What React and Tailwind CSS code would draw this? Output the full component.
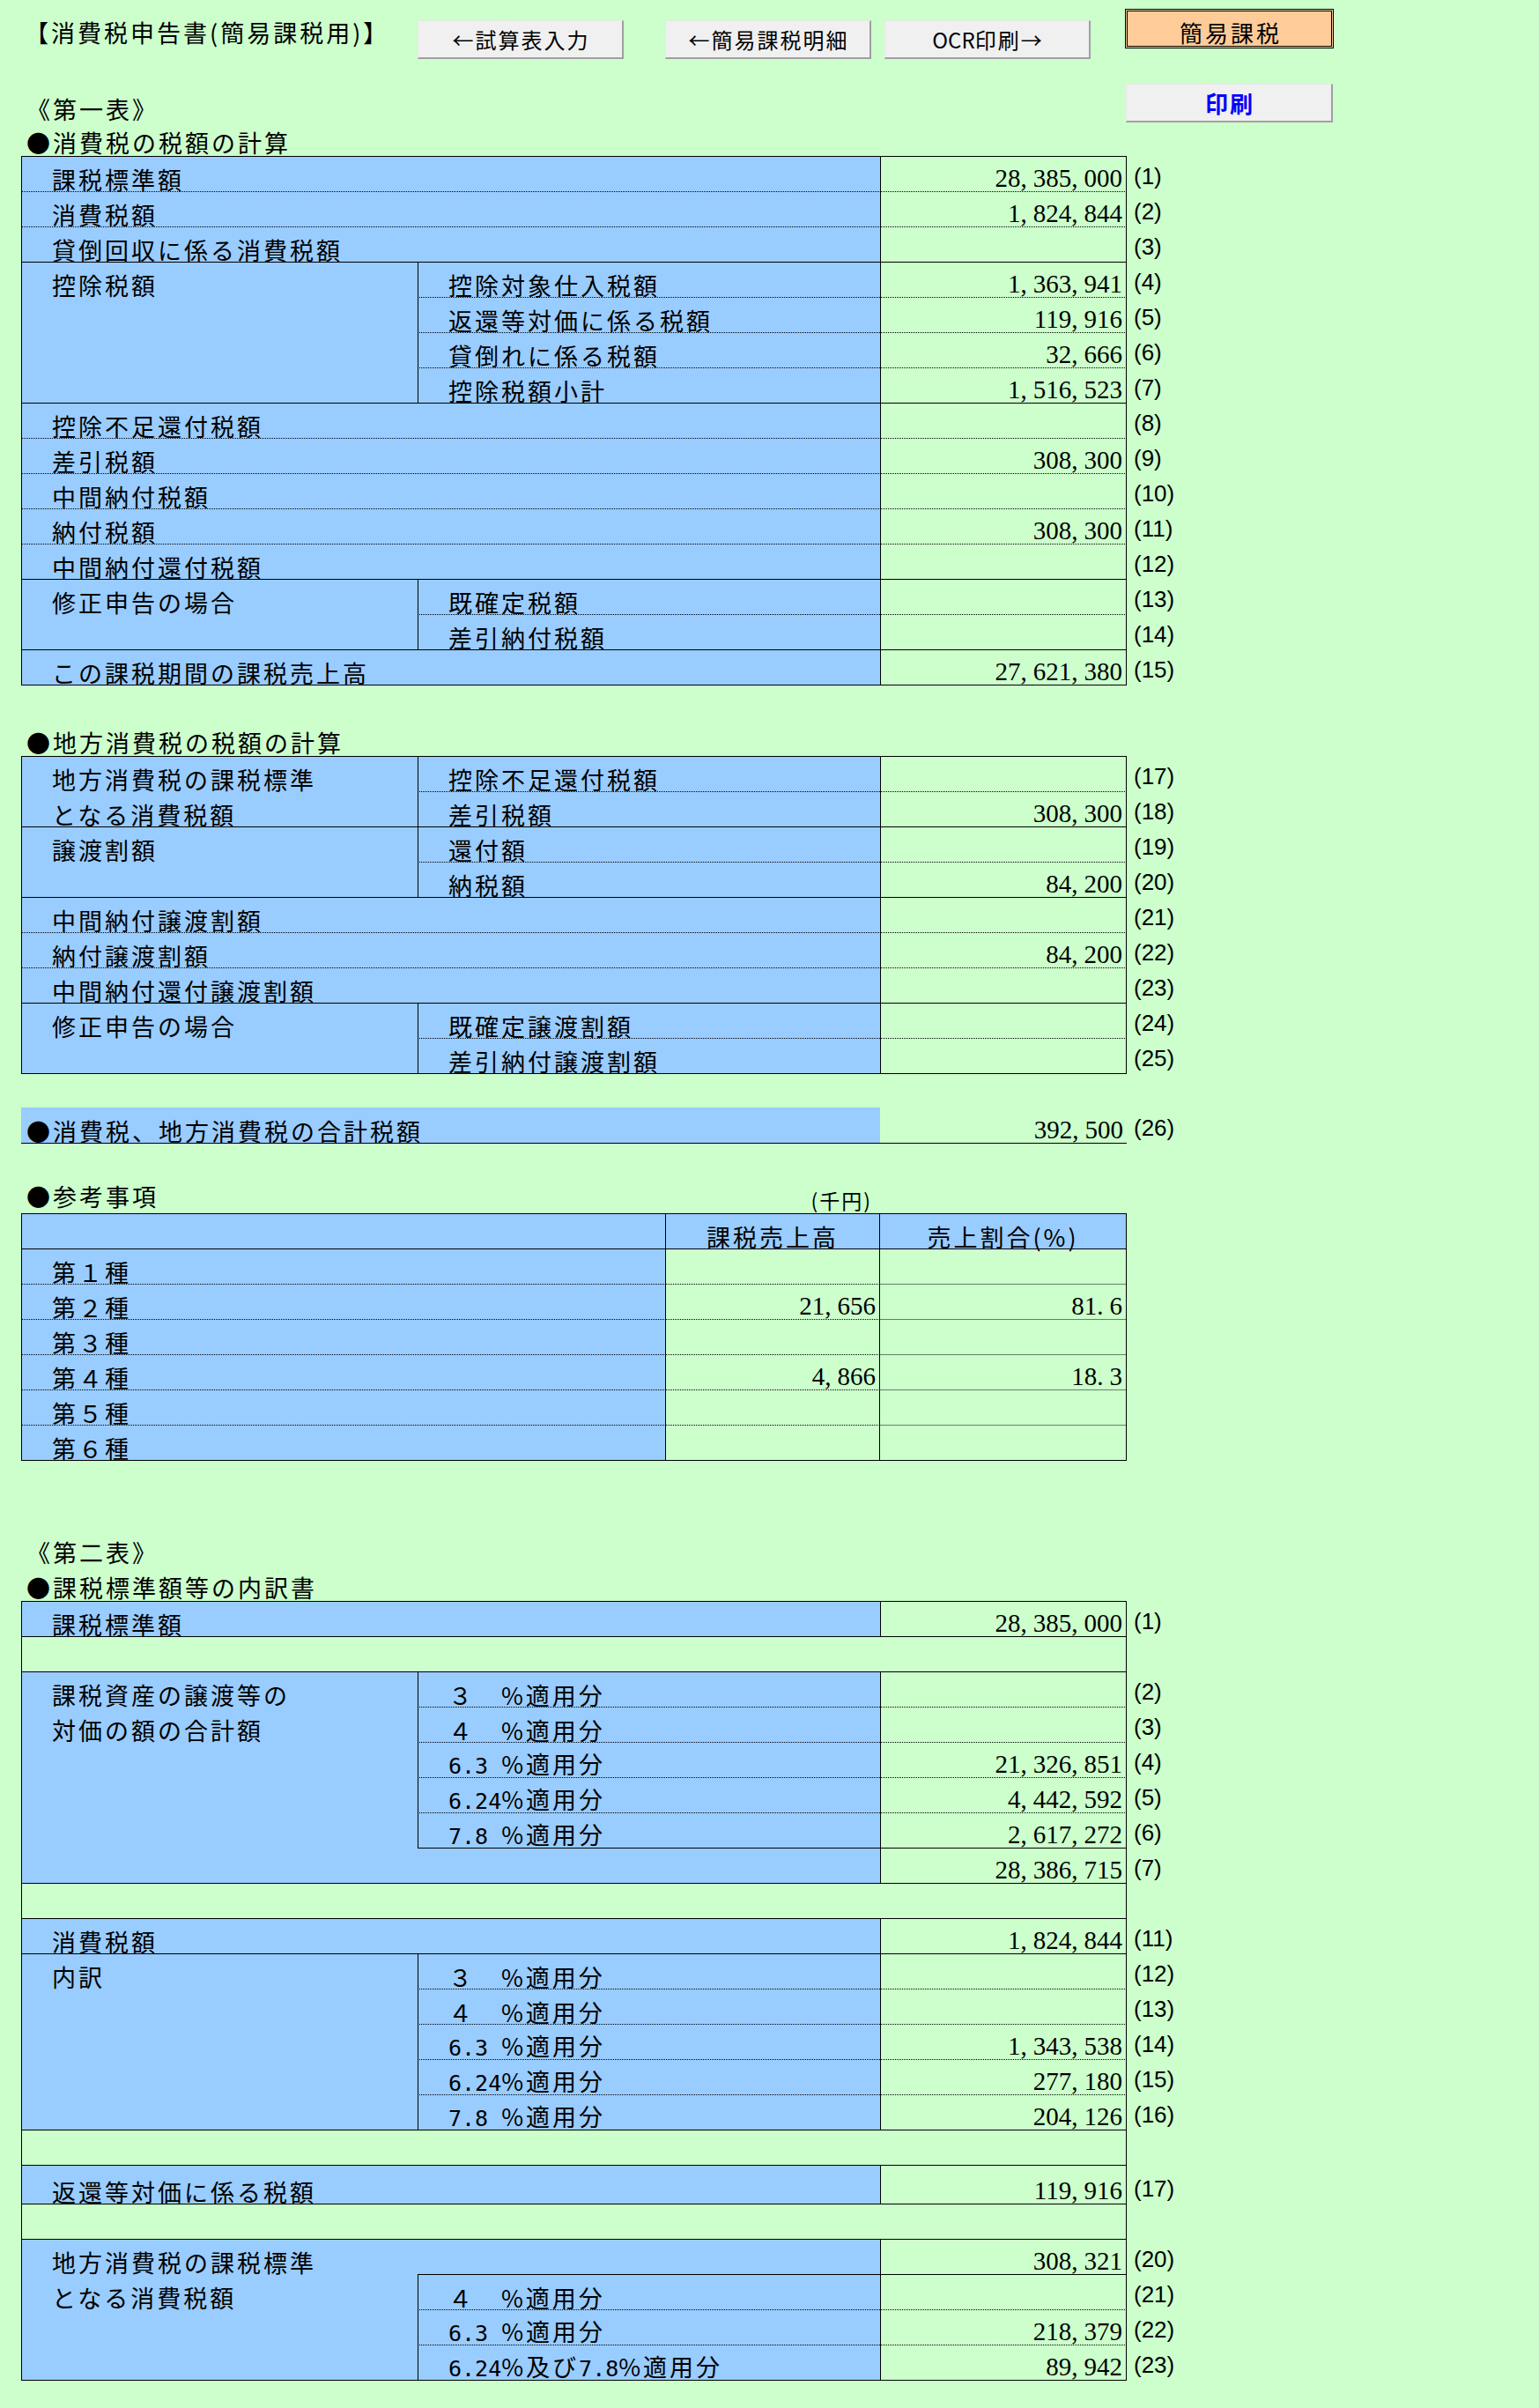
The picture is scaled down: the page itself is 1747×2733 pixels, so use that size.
import React from "react";

const T = "font-['Noto_Sans_CJK_JP',sans-serif] text-[27px] leading-none tracking-[3px] text-black whitespace-nowrap";
const NUM = "font-['Liberation_Serif','Noto_Sans_CJK_JP',serif] text-[29px] leading-none text-black whitespace-nowrap";
const LBL = "font-['Liberation_Sans',sans-serif] text-[26px] leading-none text-black whitespace-nowrap";
const BTNTXT = "font-['Noto_Sans_CJK_JP',sans-serif] text-[24px] leading-none tracking-[2px] pl-[2px] text-black whitespace-nowrap";
const MONO = "font-['DejaVu_Sans_Mono',monospace] text-[25px] tracking-normal";

const DOT = "pb-[1px] bg-[linear-gradient(to_right,#000_1px,transparent_1px)] bg-[length:2px_1px] bg-repeat-x bg-bottom";
const BOT = {
  dot: DOT,
  solid: "border-b border-black",
  none: "",
};
const RS = { 1: "", 2: "row-span-2", 4: "row-span-4", 5: "row-span-5", 6: "row-span-6" };

function Num({ v }) {
  if (!v) return null;
  const out = [];
  for (let i = 0; i < v.length; i++) {
    const c = v[i];
    if (c === "," || c === ".") out.push(<span key={i} className="mr-[7px]">{c}</span>);
    else out.push(<span key={i}>{c}</span>);
  }
  return <span className={NUM}>{out}</span>;
}

function Rate({ p, mono = false, rest }) {
  return (
    <>
      {mono ? <span className={MONO}>{p}</span> : <span>{p}</span>}
      {rest}
    </>
  );
}

function LCell({ lines, span = 1, cols = 1, b = "dot" }) {
  const cls = `${cols === 2 ? "col-span-2" : ""} ${RS[span]} ${BOT[b]} border-l border-black bg-[#99ccff] flex flex-col`;
  return (
    <div className={cls}>
      {span === 1 ? (
        <div className="h-full flex items-end pl-[34px]">
          <span className={T}>{lines[0]}</span>
        </div>
      ) : (
        lines.map((l, i) => (
          <div key={i} className="h-[40px] shrink-0 flex items-end pb-[1px] pl-[34px]">
            <span className={T}>{l}</span>
          </div>
        ))
      )}
    </div>
  );
}

function SCell({ children, b = "dot", noLeft = false }) {
  return (
    <div className={`${BOT[b]} ${noLeft ? "" : "border-l border-black"} bg-[#99ccff] flex items-end pl-[34px]`}>
      <span className={T}>{children}</span>
    </div>
  );
}

function VCell({ v, b = "dot" }) {
  return (
    <div className={`${BOT[b]} border-l border-r border-black flex items-end justify-end pr-[4px]`}>
      <Num v={v} />
    </div>
  );
}

function NCell({ n }) {
  return (
    <div className="flex items-end pl-[8px] pb-[5px]">
      <span className={LBL}>{n}</span>
    </div>
  );
}

function Blank() {
  return (
    <>
      <div className="col-span-3 border-l border-r border-b border-black" />
      <div />
    </>
  );
}

function TopLine() {
  return <div className="ml-[24px] w-[1255px] h-px bg-black" />;
}

function Heading({ h, pb, children }) {
  return (
    <div className={`${h} ${pb} flex items-end pl-[30px]`}>
      <span className={T}>{children}</span>
    </div>
  );
}

const BTN = "h-[44px] bg-[#f0f0f0] border-t border-l border-t-[#e8e8e8] border-l-[#e8e8e8] border-r-2 border-b-2 border-r-[#a0a0a0] border-b-[#a0a0a0] flex items-center justify-center";

export default function App() {
  return (
    <div className="w-full min-h-[2733px] bg-[#ccffcc] overflow-hidden">
      {/* Block A */}
      <div className="h-[95px] flex items-start">
        <div className="ml-[28px] w-[446px] mt-[23px]">
          <span className={T}>【消費税申告書(簡易課税用)】</span>
        </div>
        <div className={`mt-[23px] w-[234px] ${BTN}`}>
          <span className={BTNTXT}>←試算表入力</span>
        </div>
        <div className={`ml-[47px] mt-[23px] w-[234px] ${BTN}`}>
          <span className={BTNTXT}>←簡易課税明細</span>
        </div>
        <div className={`ml-[15px] mt-[23px] w-[234px] ${BTN}`}>
          <span className={BTNTXT}>
            <span className="tracking-normal">OCR</span>印刷→
          </span>
        </div>
        <div className="ml-[39px] mt-[10px] w-[237px] h-[45px] bg-[#ffcc99] border-[3px] border-double border-black flex items-end justify-center pb-[2px]">
          <span className="font-['Noto_Sans_CJK_JP',sans-serif] text-[26px] leading-none tracking-[3px] pl-[3px] text-black whitespace-nowrap">簡易課税</span>
        </div>
      </div>

      {/* Block B */}
      <div className="h-[44px] flex">
        <div className="w-[1278px] pl-[30px] pb-[2px] flex items-end">
          <span className={T}>《第一表》</span>
        </div>
        <div className={`w-[235px] ${BTN}`}>
          <span className="font-['Noto_Sans_CJK_JP',sans-serif] text-[26px] leading-none tracking-[2px] pl-[2px] font-bold text-[#0000ff] whitespace-nowrap">印刷</span>
        </div>
      </div>

      <Heading h="h-[38px]" pb="pb-[2px]">●消費税の税額の計算</Heading>

      {/* Table 1 */}
      <TopLine />
      <div className="ml-[24px] grid grid-cols-[450px_525px_280px_120px] grid-rows-[repeat(15,40px)]">
        <LCell cols={2} lines={["課税標準額"]} />
        <VCell v="28,385,000" />
        <NCell n="(1)" />
        <LCell cols={2} lines={["消費税額"]} />
        <VCell v="1,824,844" />
        <NCell n="(2)" />
        <LCell cols={2} lines={["貸倒回収に係る消費税額"]} b="solid" />
        <VCell b="solid" />
        <NCell n="(3)" />
        <LCell span={4} lines={["控除税額"]} b="solid" />
        <SCell>控除対象仕入税額</SCell>
        <VCell v="1,363,941" />
        <NCell n="(4)" />
        <SCell>返還等対価に係る税額</SCell>
        <VCell v="119,916" />
        <NCell n="(5)" />
        <SCell>貸倒れに係る税額</SCell>
        <VCell v="32,666" />
        <NCell n="(6)" />
        <SCell b="solid">控除税額小計</SCell>
        <VCell v="1,516,523" b="solid" />
        <NCell n="(7)" />
        <LCell cols={2} lines={["控除不足還付税額"]} />
        <VCell />
        <NCell n="(8)" />
        <LCell cols={2} lines={["差引税額"]} />
        <VCell v="308,300" />
        <NCell n="(9)" />
        <LCell cols={2} lines={["中間納付税額"]} />
        <VCell />
        <NCell n="(10)" />
        <LCell cols={2} lines={["納付税額"]} />
        <VCell v="308,300" />
        <NCell n="(11)" />
        <LCell cols={2} lines={["中間納付還付税額"]} b="solid" />
        <VCell b="solid" />
        <NCell n="(12)" />
        <LCell span={2} lines={["修正申告の場合"]} b="solid" />
        <SCell>既確定税額</SCell>
        <VCell />
        <NCell n="(13)" />
        <SCell b="solid">差引納付税額</SCell>
        <VCell b="solid" />
        <NCell n="(14)" />
        <LCell cols={2} lines={["この課税期間の課税売上高"]} b="solid" />
        <VCell v="27,621,380" b="solid" />
        <NCell n="(15)" />
      </div>

      <Heading h="h-[80px]" pb="pb-[2px]">●地方消費税の税額の計算</Heading>

      {/* Table 2 */}
      <TopLine />
      <div className="ml-[24px] grid grid-cols-[450px_525px_280px_120px] grid-rows-[repeat(9,40px)]">
        <LCell span={2} lines={["地方消費税の課税標準", "となる消費税額"]} b="solid" />
        <SCell>控除不足還付税額</SCell>
        <VCell />
        <NCell n="(17)" />
        <SCell b="solid">差引税額</SCell>
        <VCell v="308,300" b="solid" />
        <NCell n="(18)" />
        <LCell span={2} lines={["譲渡割額"]} b="solid" />
        <SCell>還付額</SCell>
        <VCell />
        <NCell n="(19)" />
        <SCell b="solid">納税額</SCell>
        <VCell v="84,200" b="solid" />
        <NCell n="(20)" />
        <LCell cols={2} lines={["中間納付譲渡割額"]} />
        <VCell />
        <NCell n="(21)" />
        <LCell cols={2} lines={["納付譲渡割額"]} />
        <VCell v="84,200" />
        <NCell n="(22)" />
        <LCell cols={2} lines={["中間納付還付譲渡割額"]} b="solid" />
        <VCell b="solid" />
        <NCell n="(23)" />
        <LCell span={2} lines={["修正申告の場合"]} b="solid" />
        <SCell>既確定譲渡割額</SCell>
        <VCell />
        <NCell n="(24)" />
        <SCell b="solid">差引納付譲渡割額</SCell>
        <VCell b="solid" />
        <NCell n="(25)" />
      </div>

      {/* Row 26 */}
      <div className="mt-[38px] flex">
        <div className="ml-[24px] w-[1255px] h-[41px] border-b border-black flex">
          <div className="w-[975px] bg-[#99ccff] flex items-end pl-[6px]">
            <span className={T}>●消費税、地方消費税の合計税額</span>
          </div>
          <div className="flex-1 flex items-end justify-end pr-[4px]">
            <Num v="392,500" />
          </div>
        </div>
        <div className="flex items-end pl-[8px] pb-[5px]">
          <span className={LBL}>(26)</span>
        </div>
      </div>

      {/* 参考事項 */}
      <div className="h-[79px] flex items-end">
        <div className="w-[755px] pl-[30px] pb-[2px]">
          <span className={T}>●参考事項</span>
        </div>
        <div className="w-[243px] flex justify-end pr-[8px] pb-[3px]">
          <span className="font-['Noto_Sans_CJK_JP',sans-serif] text-[23px] leading-none tracking-[2px] text-black whitespace-nowrap">(千円)</span>
        </div>
      </div>
      <TopLine />
      <div className="ml-[24px] grid grid-cols-[731px_243px_281px] grid-rows-[repeat(7,40px)]">
        <div className="border-l border-b border-black bg-[#99ccff]" />
        <div className="border-l border-b border-black bg-[#99ccff] flex items-end justify-center">
          <span className={T}>課税売上高</span>
        </div>
        <div className="border-l border-r border-b border-black bg-[#99ccff] flex items-end justify-center">
          <span className={T}>売上割合(%)</span>
        </div>
        {[
          ["第１種", "", ""],
          ["第２種", "21,656", "81.6"],
          ["第３種", "", ""],
          ["第４種", "4,866", "18.3"],
          ["第５種", "", ""],
          ["第６種", "", ""],
        ].map(([a, b, c], i) => {
          const bot = i === 5 ? BOT.solid : BOT.dot;
          return (
            <React.Fragment key={i}>
              <div className={`${bot} border-l border-black bg-[#99ccff] flex items-end pl-[34px]`}>
                <span className={T}>{a}</span>
              </div>
              <div className={`${bot} border-l border-black flex items-end justify-end pr-[4px]`}>
                <Num v={b} />
              </div>
              <div className={`${bot} border-l border-r border-black flex items-end justify-end pr-[4px]`}>
                <Num v={c} />
              </div>
            </React.Fragment>
          );
        })}
      </div>

      {/* 第二表 */}
      <Heading h="h-[120px]" pb="pb-[3px]">《第二表》</Heading>
      <Heading h="h-[39px]" pb="pb-[2px]">●課税標準額等の内訳書</Heading>
      <TopLine />
      <div className="ml-[24px] grid grid-cols-[450px_525px_280px_120px] grid-rows-[repeat(16,40px)_44px_repeat(5,40px)]">
        <LCell cols={2} lines={["課税標準額"]} b="solid" />
        <VCell v="28,385,000" b="solid" />
        <NCell n="(1)" />
        <Blank />
        <LCell span={6} lines={["課税資産の譲渡等の", "対価の額の合計額"]} b="solid" />
        <SCell><Rate p="３　" rest="%適用分" /></SCell>
        <VCell />
        <NCell n="(2)" />
        <SCell><Rate p="４　" rest="%適用分" /></SCell>
        <VCell />
        <NCell n="(3)" />
        <SCell><Rate mono p="6.3 " rest="%適用分" /></SCell>
        <VCell v="21,326,851" />
        <NCell n="(4)" />
        <SCell><Rate mono p="6.24" rest="%適用分" /></SCell>
        <VCell v="4,442,592" />
        <NCell n="(5)" />
        <SCell b="solid"><Rate mono p="7.8 " rest="%適用分" /></SCell>
        <VCell v="2,617,272" b="solid" />
        <NCell n="(6)" />
        <SCell b="solid" noLeft>{""}</SCell>
        <VCell v="28,386,715" b="solid" />
        <NCell n="(7)" />
        <Blank />
        <LCell cols={2} lines={["消費税額"]} b="solid" />
        <VCell v="1,824,844" b="solid" />
        <NCell n="(11)" />
        <LCell span={5} lines={["内訳"]} b="solid" />
        <SCell><Rate p="３　" rest="%適用分" /></SCell>
        <VCell />
        <NCell n="(12)" />
        <SCell><Rate p="４　" rest="%適用分" /></SCell>
        <VCell />
        <NCell n="(13)" />
        <SCell><Rate mono p="6.3 " rest="%適用分" /></SCell>
        <VCell v="1,343,538" />
        <NCell n="(14)" />
        <SCell><Rate mono p="6.24" rest="%適用分" /></SCell>
        <VCell v="277,180" />
        <NCell n="(15)" />
        <SCell b="solid"><Rate mono p="7.8 " rest="%適用分" /></SCell>
        <VCell v="204,126" b="solid" />
        <NCell n="(16)" />
        <Blank />
        <LCell cols={2} lines={["返還等対価に係る税額"]} b="solid" />
        <VCell v="119,916" b="solid" />
        <NCell n="(17)" />
        <Blank />
        <LCell span={4} lines={["地方消費税の課税標準", "となる消費税額"]} b="solid" />
        <SCell b="solid" noLeft>{""}</SCell>
        <VCell v="308,321" b="solid" />
        <NCell n="(20)" />
        <SCell><Rate p="４　" rest="%適用分" /></SCell>
        <VCell />
        <NCell n="(21)" />
        <SCell><Rate mono p="6.3 " rest="%適用分" /></SCell>
        <VCell v="218,379" />
        <NCell n="(22)" />
        <SCell b="solid">
          <span className={MONO}>6.24</span>%及び<span className={MONO}>7.8</span>%適用分
        </SCell>
        <VCell v="89,942" b="solid" />
        <NCell n="(23)" />
      </div>
    </div>
  );
}
